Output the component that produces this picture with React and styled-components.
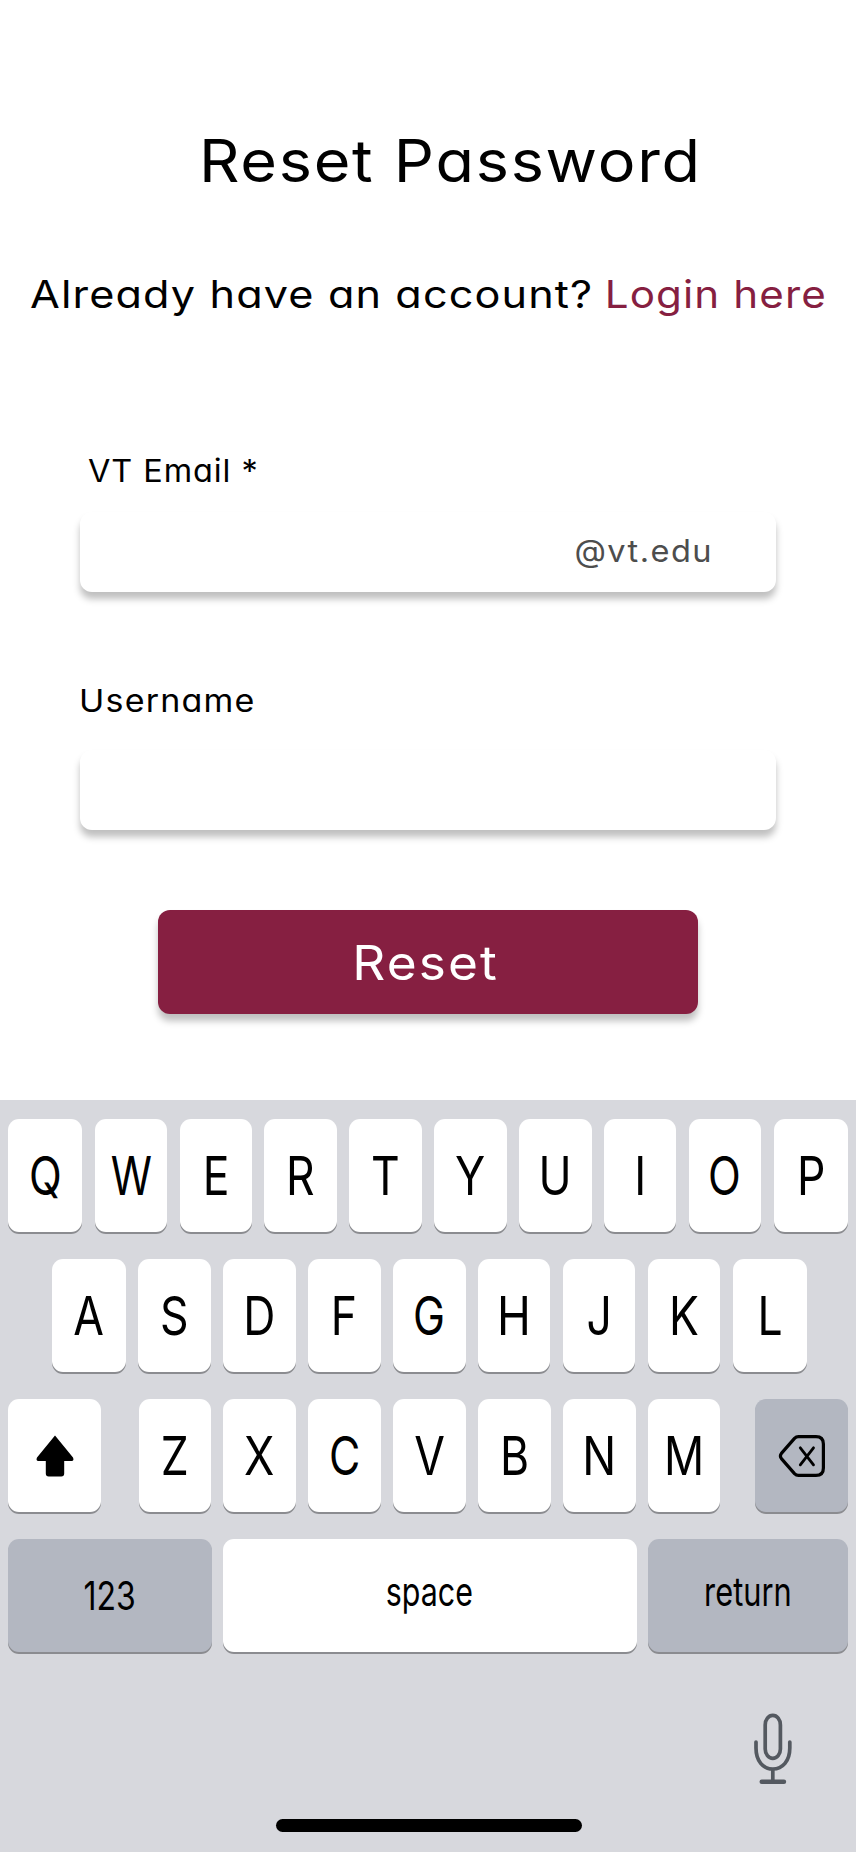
import React from "react";
import styled, { createGlobalStyle } from "styled-components";

const GlobalStyle = createGlobalStyle`
  * { box-sizing: border-box; }
  body { margin: 0; background: #fff; }
  button, input { font: inherit; border: 0; padding: 0; margin: 0; }
`;

const Screen = styled.div`
  width: 856px;
  height: 1852px;
  display: flex;
  flex-direction: column;
  overflow: hidden;
  background: #fff;
  color: #000;
  font-family: Inter, "Liberation Sans", sans-serif;
`;

const Form = styled.main`
  height: 1100px;
  padding-top: 121px;
  display: flex;
  flex-direction: column;
  font-feature-settings: "cv11";
`;

const Wide = styled.span`
  display: inline-block;
  transform: scaleX(${(p) => p.$sx});
  transform-origin: ${(p) => p.$origin || "left"} center;
`;

const Title = styled.h1`
  margin: 0 0 63.5px 199px;
  height: 80px;
  line-height: 80px;
  font-size: 58.5px;
  font-weight: 400;
  letter-spacing: 1.6px;
  white-space: nowrap;
`;

const Prompt = styled.p`
  margin: 0 0 126.5px 30px;
  height: 60px;
  display: flex;
  justify-content: space-between;
  width: 797px;
  line-height: 59px;
  font-size: 38.5px;
  letter-spacing: 1px;
  white-space: nowrap;
`;

const LoginLink = styled.a`
  color: #861f41;
`;

const Label = styled.label`
  margin-left: ${(p) => p.$left}px;
  height: 40px;
  line-height: 40px;
  font-size: 31.5px;
  letter-spacing: ${(p) => p.$track}px;
  white-space: nowrap;
`;

const Field = styled.div`
  margin: ${(p) => p.$gap}px 0 0 80px;
  width: 696px;
  height: 80px;
  padding-right: 63px;
  display: flex;
  align-items: center;
  justify-content: flex-end;
  border-radius: 12px;
  background: #fff;
  box-shadow: 0 7px 7px rgba(0, 0, 0, 0.25);
`;

const Suffix = styled.span`
  color: #4d4d4d;
  font-size: 31px;
  line-height: 40px;
  letter-spacing: 1.4px;
  margin-top: -3px;
`;

const Spacer = styled.div`
  height: ${(p) => p.$h}px;
`;

const ResetButton = styled.button`
  margin: 80.5px 0 0 158px;
  width: 540px;
  height: 104px;
  border-radius: 12px;
  background: #861f41;
  color: #fff;
  font-size: 48px;
  letter-spacing: 2px;
  line-height: 105px;
  padding-right: 5px;
  box-shadow: 0 7px 7px rgba(0, 0, 0, 0.25);
`;

const Keyboard = styled.section`
  flex: 1;
  padding: 19px 8px 0;
  background: #d7d8dd;
  display: flex;
  flex-direction: column;
`;

const KeyRow = styled.div`
  display: flex;
  justify-content: space-between;
  height: 113px;
  margin-bottom: 27px;
  padding: 0 ${(p) => p.$right || 0}px 0 ${(p) => p.$left || 0}px;
`;

const KeyGroup = styled.div`
  display: flex;
  justify-content: space-between;
  width: 582px;
  margin-left: 3px;
`;

const Key = styled.button`
  width: ${(p) => p.$w || 72.6}px;
  height: 113px;
  display: flex;
  align-items: center;
  justify-content: center;
  border-radius: 11px;
  background: ${(p) => (p.$dark ? "#b3b7c1" : "#fff")};
  box-shadow: 0 2px 0 #8b8c90;
  color: #000;
`;

const Glyph = styled.span`
  font-size: 53.6px;
  line-height: 113px;
  transform: scaleX(${(p) => p.$sx});
`;

const Word = styled.span`
  font-size: 40px;
  line-height: 50px;
  white-space: nowrap;
  transform: translateY(${(p) => p.$dy || 0}px) scaleX(${(p) => p.$sx});
`;

const BottomBar = styled.div`
  display: flex;
  justify-content: flex-end;
  padding: 34px 55px 0 0;
  height: 140px;
`;

const HomeIndicator = styled.div`
  width: 306px;
  height: 13px;
  margin-left: 267.5px;
  border-radius: 7px;
  background: #000;
`;

const SCALE = {
  W: 0.78, Q: 0.8, O: 0.8, G: 0.8, C: 0.8, D: 0.83, M: 0.83, H: 0.85, N: 0.84,
};

function Letter({ char, width }) {
  return (
    <Key $w={width}>
      <Glyph $sx={SCALE[char] || 0.83}>{char}</Glyph>
    </Key>
  );
}

function Letters({ chars, wideEnds }) {
  const last = chars.length - 1;
  return [...chars].map((c, i) => (
    <Letter key={c} char={c} width={wideEnds && (i === 0 || i === last) ? 74.4 : 72.6} />
  ));
}

const ShiftIcon = () => (
  <svg width="40" height="44" viewBox="0 0 40 44">
    <path d="M20 1.6 L38 23.4 Q39.4 26.6 36.6 27 H29.2 V39.5 Q29.2 42.4 26.3 42.4 H13.7 Q10.8 42.4 10.8 39.5 V27 H3.4 Q0.6 26.6 2 23.4 Z" fill="#000" />
  </svg>
);

const DeleteIcon = () => (
  <svg width="48" height="44" viewBox="0 0 48 44" fill="none" stroke="#000" strokeLinecap="round" strokeLinejoin="round">
    <path d="M20.5 2.6 H38 Q45.4 2.6 45.4 10 V34 Q45.4 41.4 38 41.4 H20.5 Q18.2 41.4 16.5 39.6 L3.4 24.6 Q1.4 22 3.4 19.4 L16.5 4.4 Q18.2 2.6 20.5 2.6 Z" strokeWidth="3.2" />
    <path d="M22.3 13.8 L35.5 30.8 M35.5 13.8 L22.3 30.8" strokeWidth="2.8" />
  </svg>
);

const MicIcon = () => (
  <svg width="40" height="72" viewBox="0 0 40 72" fill="none" stroke="#545960" strokeWidth="3.7" strokeLinecap="round">
    <rect x="12.2" y="2.4" width="15.2" height="43" rx="7.6" ry="9.5" />
    <path d="M3 29 V35 C3 48 10 56 19.8 56 C29.6 56 36.8 48 36.8 35 V29" />
    <path d="M19.8 56 V68" strokeLinecap="butt" />
    <path d="M8.7 68.8 H31" strokeWidth="4.4" />
  </svg>
);

export default function App() {
  return (
    <Screen>
      <GlobalStyle />
      <Form>
        <Title><Wide $sx={1.076}>Reset Password</Wide></Title>
        <Prompt>
          <Wide $sx={1.122}>Already have an account?</Wide>
          <LoginLink><Wide $sx={1.095} $origin="right">Login here</Wide></LoginLink>
        </Prompt>
        <Label $left={88} $track={0.9}><Wide $sx={1.03}>VT Email *</Wide></Label>
        <Field $gap={21}>
          <Suffix><Wide $sx={1.05} $origin="right">@vt.edu</Wide></Suffix>
        </Field>
        <Spacer $h={89} />
        <Label $left={79} $track={1.1}><Wide $sx={1.08}>Username</Wide></Label>
        <Field $gap={28.5} />
        <ResetButton><Wide $sx={1.07} $origin="center">Reset</Wide></ResetButton>
      </Form>
      <Keyboard>
        <KeyRow>
          <Letters chars="QWERTYUIOP" wideEnds />
        </KeyRow>
        <KeyRow $left={43.5} $right={41}>
          <Letters chars="ASDFGHJKL" wideEnds />
        </KeyRow>
        <KeyRow>
          <Key $w={93}><ShiftIcon /></Key>
          <KeyGroup>
            <Letters chars="ZXCVBNM" />
          </KeyGroup>
          <Key $w={93} $dark><DeleteIcon /></Key>
        </KeyRow>
        <KeyRow>
          <Key $w={204} $dark><Word $sx={0.8}>123</Word></Key>
          <Key $w={414.5}><Word $sx={0.76} $dy={-4}>space</Word></Key>
          <Key $w={200.5} $dark><Word $sx={0.77} $dy={-4}>return</Word></Key>
        </KeyRow>
        <BottomBar><MicIcon /></BottomBar>
        <HomeIndicator />
      </Keyboard>
    </Screen>
  );
}
